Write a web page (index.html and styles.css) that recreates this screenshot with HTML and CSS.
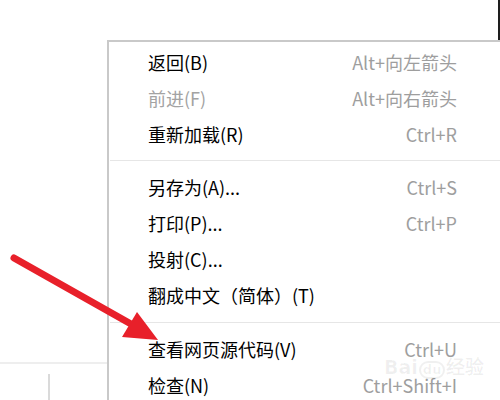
FILE: index.html
```html
<!DOCTYPE html>
<html lang="zh-CN">
<head>
<meta charset="utf-8">
<title>右键菜单</title>
<link rel="stylesheet" href="styles.css">
</head>
<body>
<div class="page">
  <div class="top-strip"></div>
  <div class="spacer"></div>
  <div class="statusbar">
    <div class="cell"></div>
    <div class="cell cell-divided"></div>
  </div>

  <div class="menu">
    <div class="item"><span class="label">返回(B)</span><span class="key">Alt+向左箭头</span></div>
    <div class="item disabled"><span class="label">前进(F)</span><span class="key">Alt+向右箭头</span></div>
    <div class="item"><span class="label">重新加载(R)</span><span class="key">Ctrl+R</span></div>
    <div class="sep"></div>
    <div class="item"><span class="label">另存为(A)...</span><span class="key">Ctrl+S</span></div>
    <div class="item"><span class="label">打印(P)...</span><span class="key">Ctrl+P</span></div>
    <div class="item"><span class="label">投射(C)...</span></div>
    <div class="item"><span class="label">翻成中文（简体）(T)</span></div>
    <div class="sep sep2"></div>
    <div class="item"><span class="label">查看网页源代码(V)</span><span class="key">Ctrl+U</span></div>
    <div class="item"><span class="label">检查(N)</span><span class="key">Ctrl+Shift+I</span></div>
  </div>

  <div class="watermark">Bai<span class="du">du</span>经验</div>

  <svg class="arrow" width="500" height="400" viewBox="0 0 500 400">
    <line x1="14" y1="258" x2="131" y2="324" stroke="#e8202a" stroke-width="7" stroke-linecap="round"/>
    <polygon points="137,312 122,337 158,340" fill="#e8202a"/>
  </svg>
</div>
</body>
</html>
```

FILE: styles.css
```css
html, body {
  margin: 0;
  padding: 0;
  background: #ffffff;
}

.page {
  position: relative;
  width: 500px;
  height: 400px;
  overflow: hidden;
  display: flex;
  flex-direction: column;
  font-family: "Noto Sans CJK SC", "Noto Sans", sans-serif;
}

.top-strip {
  height: 40px;
  border-right: 2px solid #1e1e1e;
  box-sizing: border-box;
}

.spacer {
  flex: 1;
}

.statusbar {
  width: 107px;
  height: 38px;
  border-top: 2px solid #eeeeee;
  display: flex;
  box-sizing: border-box;
}

.statusbar .cell {
  width: 48px;
}

.statusbar .cell-divided {
  margin-top: 10px;
  border-left: 2px solid #dadada;
}

.menu {
  position: absolute;
  left: 107px;
  top: 40px;
  width: 420px;
  height: 400px;
  background: #ffffff;
  border-left: 2px solid #c9c9c9;
  border-top: 2px solid #c9c9c9;
  box-sizing: border-box;
  padding-top: 2px;
  display: flex;
  flex-direction: column;
}

.item {
  box-sizing: border-box;
  height: 36px;
  flex: none;
  display: flex;
  align-items: center;
  justify-content: space-between;
  padding-left: 39px;
  width: 348px;
  font-size: 18px;
  color: #000000;
  white-space: nowrap;
}

.item .key {
  color: #9e9e9e;
}

.item.disabled .label {
  color: #a3a3a3;
}

.sep {
  flex: none;
  height: 1px;
  background: #e6e6e6;
  margin: 8px 0 8px 1px;
}

.sep.sep2 {
  margin-top: 9px;
  margin-bottom: 8px;
}

.watermark {
  position: absolute;
  left: 384px;
  top: 357px;
  font-family: "DejaVu Sans", sans-serif;
  font-weight: bold;
  font-size: 19px;
  line-height: 20px;
  color: rgba(0, 0, 0, 0.06);
}

.watermark .du {
  display: inline-block;
  border-radius: 10px;
  padding: 0 2px;
  border: 2px solid rgba(0, 0, 0, 0.06);
  font-size: 13px;
  line-height: 14px;
  margin: 0 1px;
}

.arrow {
  position: absolute;
  left: 0;
  top: 0;
  pointer-events: none;
}
```
